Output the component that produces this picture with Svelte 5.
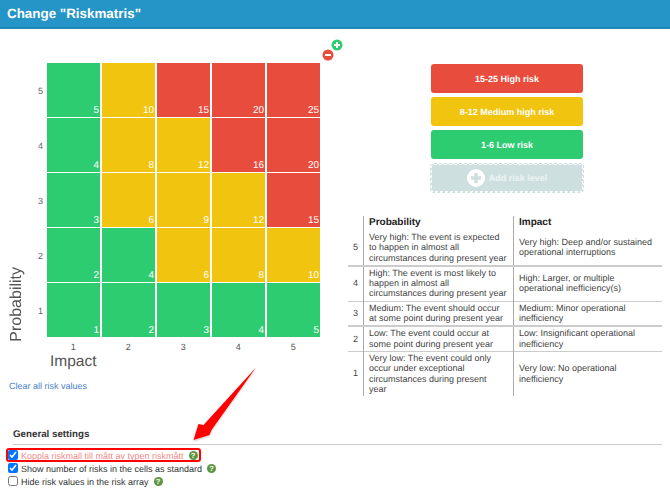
<script>
  const rows = [
    [5, ['g', 'y', 'r', 'r', 'r']],
    [4, ['g', 'y', 'y', 'r', 'r']],
    [3, ['g', 'y', 'y', 'y', 'r']],
    [2, ['g', 'g', 'y', 'y', 'y']],
    [1, ['g', 'g', 'g', 'g', 'g']]
  ];
  const desc = [
    [5, 'Very high: The event is expected to happen in almost all circumstances during present year', 'Very high: Deep and/or sustained operational interruptions'],
    [4, 'High: The event is most likely to happen in almost all circumstances during present year', 'High: Larger, or multiple operational inefficiency(s)'],
    [3, 'Medium: The event should occur at some point during present year', 'Medium: Minor operational inefficiency'],
    [2, 'Low: The event could occur at some point during present year', 'Low: Insignificant operational inefficiency'],
    [1, 'Very low: The event could only occur under exceptional circumstances during present year', 'Very low: No operational inefficiency']
  ];
  const settings = [
    ['Koppla riskmall till mått av typen riskmått', true, true],
    ['Show number of risks in the cells as standard', true, false],
    ['Hide risk values in the risk array', false, false]
  ];
</script>

<div class="page">
  <header>Change "Riskmatris"</header>
  <main>
    <section class="left">
      <div class="matrix">
        <div class="ytitle"><span>Probability</span></div>
        {#each rows as [p, cells]}
          <div class="rowlabel">{p}</div>
          {#each cells as c, i}
            <div class="cell {c}">{p * (i + 1)}</div>
          {/each}
        {/each}
        <div class="collabel first">1</div>
        <div class="collabel">2</div>
        <div class="collabel">3</div>
        <div class="collabel">4</div>
        <div class="collabel">5</div>
        <svg class="round add" viewBox="0 0 12 12"><circle cx="6" cy="6" r="5.5" fill="#2ecc71"/><path d="M6 3v6M3 6h6" stroke="#fff" stroke-width="2"/></svg>
        <svg class="round del" viewBox="0 0 12 12"><circle cx="6" cy="6" r="5.5" fill="#e74c3c"/><path d="M3 6h6" stroke="#fff" stroke-width="2"/></svg>
      </div>
      <div class="xtitle">Impact</div>
      <a class="clear" href="#clear">Clear all risk values</a>
    </section>
    <section class="right">
      <div class="legend">
        <div class="level r">15-25 High risk</div>
        <div class="level y">8-12 Medium high risk</div>
        <div class="level g">1-6 Low risk</div>
        <div class="level addlevel">
          <svg viewBox="0 0 18 18"><circle cx="9" cy="9" r="9" fill="#fff"/><path d="M9 4v10M4 9h10" stroke="#cddfdf" stroke-width="3.4"/></svg>
          Add risk level
        </div>
      </div>
      <table>
        <thead>
          <tr><th class="n"></th><th>Probability</th><th>Impact</th></tr>
        </thead>
        <tbody>
          {#each desc as [n, a, b], i}
            <tr class:thick={i === 0 || i === 2}><td class="n">{n}</td><td>{a}</td><td>{b}</td></tr>
          {/each}
        </tbody>
      </table>
    </section>
  </main>
  <section class="settings">
    <h3>General settings</h3>
    {#each settings as [label, on, marked]}
      <label class="setting" class:marked>
        <input type="checkbox" checked={on} />
        <span class="txt">{label}</span>
        <span class="help">?</span>
      </label>
    {/each}
  </section>
  <svg class="arrow" viewBox="0 0 670 501" width="670" height="501">
    <defs>
      <filter id="sh" x="-20%" y="-20%" width="140%" height="140%"><feDropShadow dx="0" dy="1" stdDeviation="1" flood-color="#000" flood-opacity=".25"/></filter>
    </defs>
    <polygon points="256,367.5 203.5,425 198.5,424 193.5,440 209.5,435 211.5,430" fill="#f00" filter="url(#sh)"/>
  </svg>
</div>

<style>
  :global(body) { margin: 0; background: #fff; }
  .page {
    position: relative;
    width: 670px;
    height: 501px;
    overflow: hidden;
    font-family: "Liberation Sans", Arial, sans-serif;
    text-rendering: geometricPrecision;
    color: #333;
    font-size: 9px;
  }
  header {
    height: 27px;
    border-bottom: 2px solid #2288b8;
    background: #2595c7;
    color: #fff;
    font-size: 13.4px;
    font-weight: 700;
    line-height: 27px;
    padding-left: 7px;
  }
  main { display: flex; height: 399px; }
  .left { width: 340px; flex: none; padding: 34px 0 0 8px; box-sizing: border-box; }
  .matrix {
    position: relative;
    display: grid;
    grid-template-columns: 21.5px 14px repeat(5, 53.5px);
    grid-template-rows: repeat(5, 53.5px) 17px;
    gap: 1.5px;
    width: max-content;
  }
  .ytitle {
    grid-column: 1;
    grid-row: 1 / 6;
    display: flex;
    align-items: flex-end;
    margin-bottom: -5px;
  }
  .ytitle span {
    writing-mode: vertical-rl;
    transform: rotate(180deg);
    font-size: 16px;
    line-height: 17px;
    color: #555;
  }
  .rowlabel { grid-column: 2; align-self: center; text-align: center; color: #666; font-size: 9px; padding-left: 5px; margin-top: 2px; }
  .cell {
    color: #fff;
    font-size: 10px;
    display: flex;
    align-items: flex-end;
    justify-content: flex-end;
    padding: 0 1px 0 0;
    line-height: 12px;
  }
  .g { background: #2ecc71; }
  .y { background: #f1c40f; }
  .r { background: #e74c3c; }
  .collabel { text-align: center; color: #555; font-size: 9px; line-height: 18px; }
  .collabel.first { grid-column: 3; }
  .round { position: absolute; width: 12px; height: 12px; }
  .add { left: 323px; top: -24px; }
  .del { left: 314px; top: -14px; }
  .xtitle { margin: -3px 0 0 42px; font-size: 15.5px; line-height: 20px; color: #555; }
  .clear { display: block; margin: 8px 0 0 1px; color: #4a7fc9; font-size: 9px; text-decoration: none; line-height: 12px; }
  .right { flex: 1; padding: 35px 8px 0 8px; }
  .legend { display: flex; flex-direction: column; gap: 4px; width: 152px; margin-left: 83px; }
  .level {
    height: 29px;
    border-radius: 3px;
    color: #fff;
    font-weight: 700;
    font-size: 9px;
    display: flex;
    align-items: center;
    justify-content: center;
    gap: 4px;
  }
  .addlevel {
    background: #cddfdf;
    height: 26px;
    border: 1px dashed #fff;
    outline: 1px dashed #cddfdf;
    outline-offset: 0;
    margin-top: 1px;
    color: #eef5f5;
  }
  .addlevel svg { width: 18px; height: 18px; }
  table { border-collapse: collapse; width: 314px; margin-top: 24px; table-layout: fixed; line-height: 10.3px; color: #333; }
  th { text-align: left; font-size: 10px; font-weight: 700; height: 15px; padding: 0 5px; color: #222; }
  td { padding: 1px 5px 2px; vertical-align: middle; color: #444; }
  th, td { border-left: 1px solid #aaa; }
  th.n, td.n { width: 5px; border-left: 0; text-align: center; }
  th:nth-child(2), td:nth-child(2) { width: 139px; }
  tr { border-bottom: 1px solid #ccc; }
  tr:last-child { border-bottom: 0; }
  tr:last-child td:nth-child(2) { padding-right: 15px; }
  thead tr { border-bottom: 1px solid #bbb; }
  tr.thick { border-bottom: 2px solid #ccc; }
  .settings { padding: 0 8px 0 8px; position: relative; margin-top: -5px; }
  h3 { margin: 0 0 0 5px; font-size: 9.75px; font-weight: 700; line-height: 24px; color: #333; }
  .settings::before { content: ""; position: absolute; left: 13px; right: 8px; top: 21px; height: 1px; background: #ccc; }
  .setting { display: flex; align-items: center; height: 13px; gap: 3px; font-size: 9px; color: #333; position: relative; }
  .setting:first-of-type { margin-top: 2px; }
  .setting input { width: 10px; height: 10px; margin: 0 0 2px; flex: none; accent-color: #0075ff; }
  .marked .txt { color: #ee8a8a; text-decoration: underline; }
  .marked::after { content: ""; position: absolute; left: -2px; top: -1px; width: 191px; height: 10px; border: 2px solid #f00; border-radius: 3px; }
  .help {
    width: 9px; height: 9px; border-radius: 50%;
    background: #5d9640; color: #fff; font-size: 7.5px; font-weight: 700; line-height: 9px; text-align: center; margin-left: 2px;
  }
  .arrow { position: absolute; left: 0; top: 0; pointer-events: none; }
</style>
